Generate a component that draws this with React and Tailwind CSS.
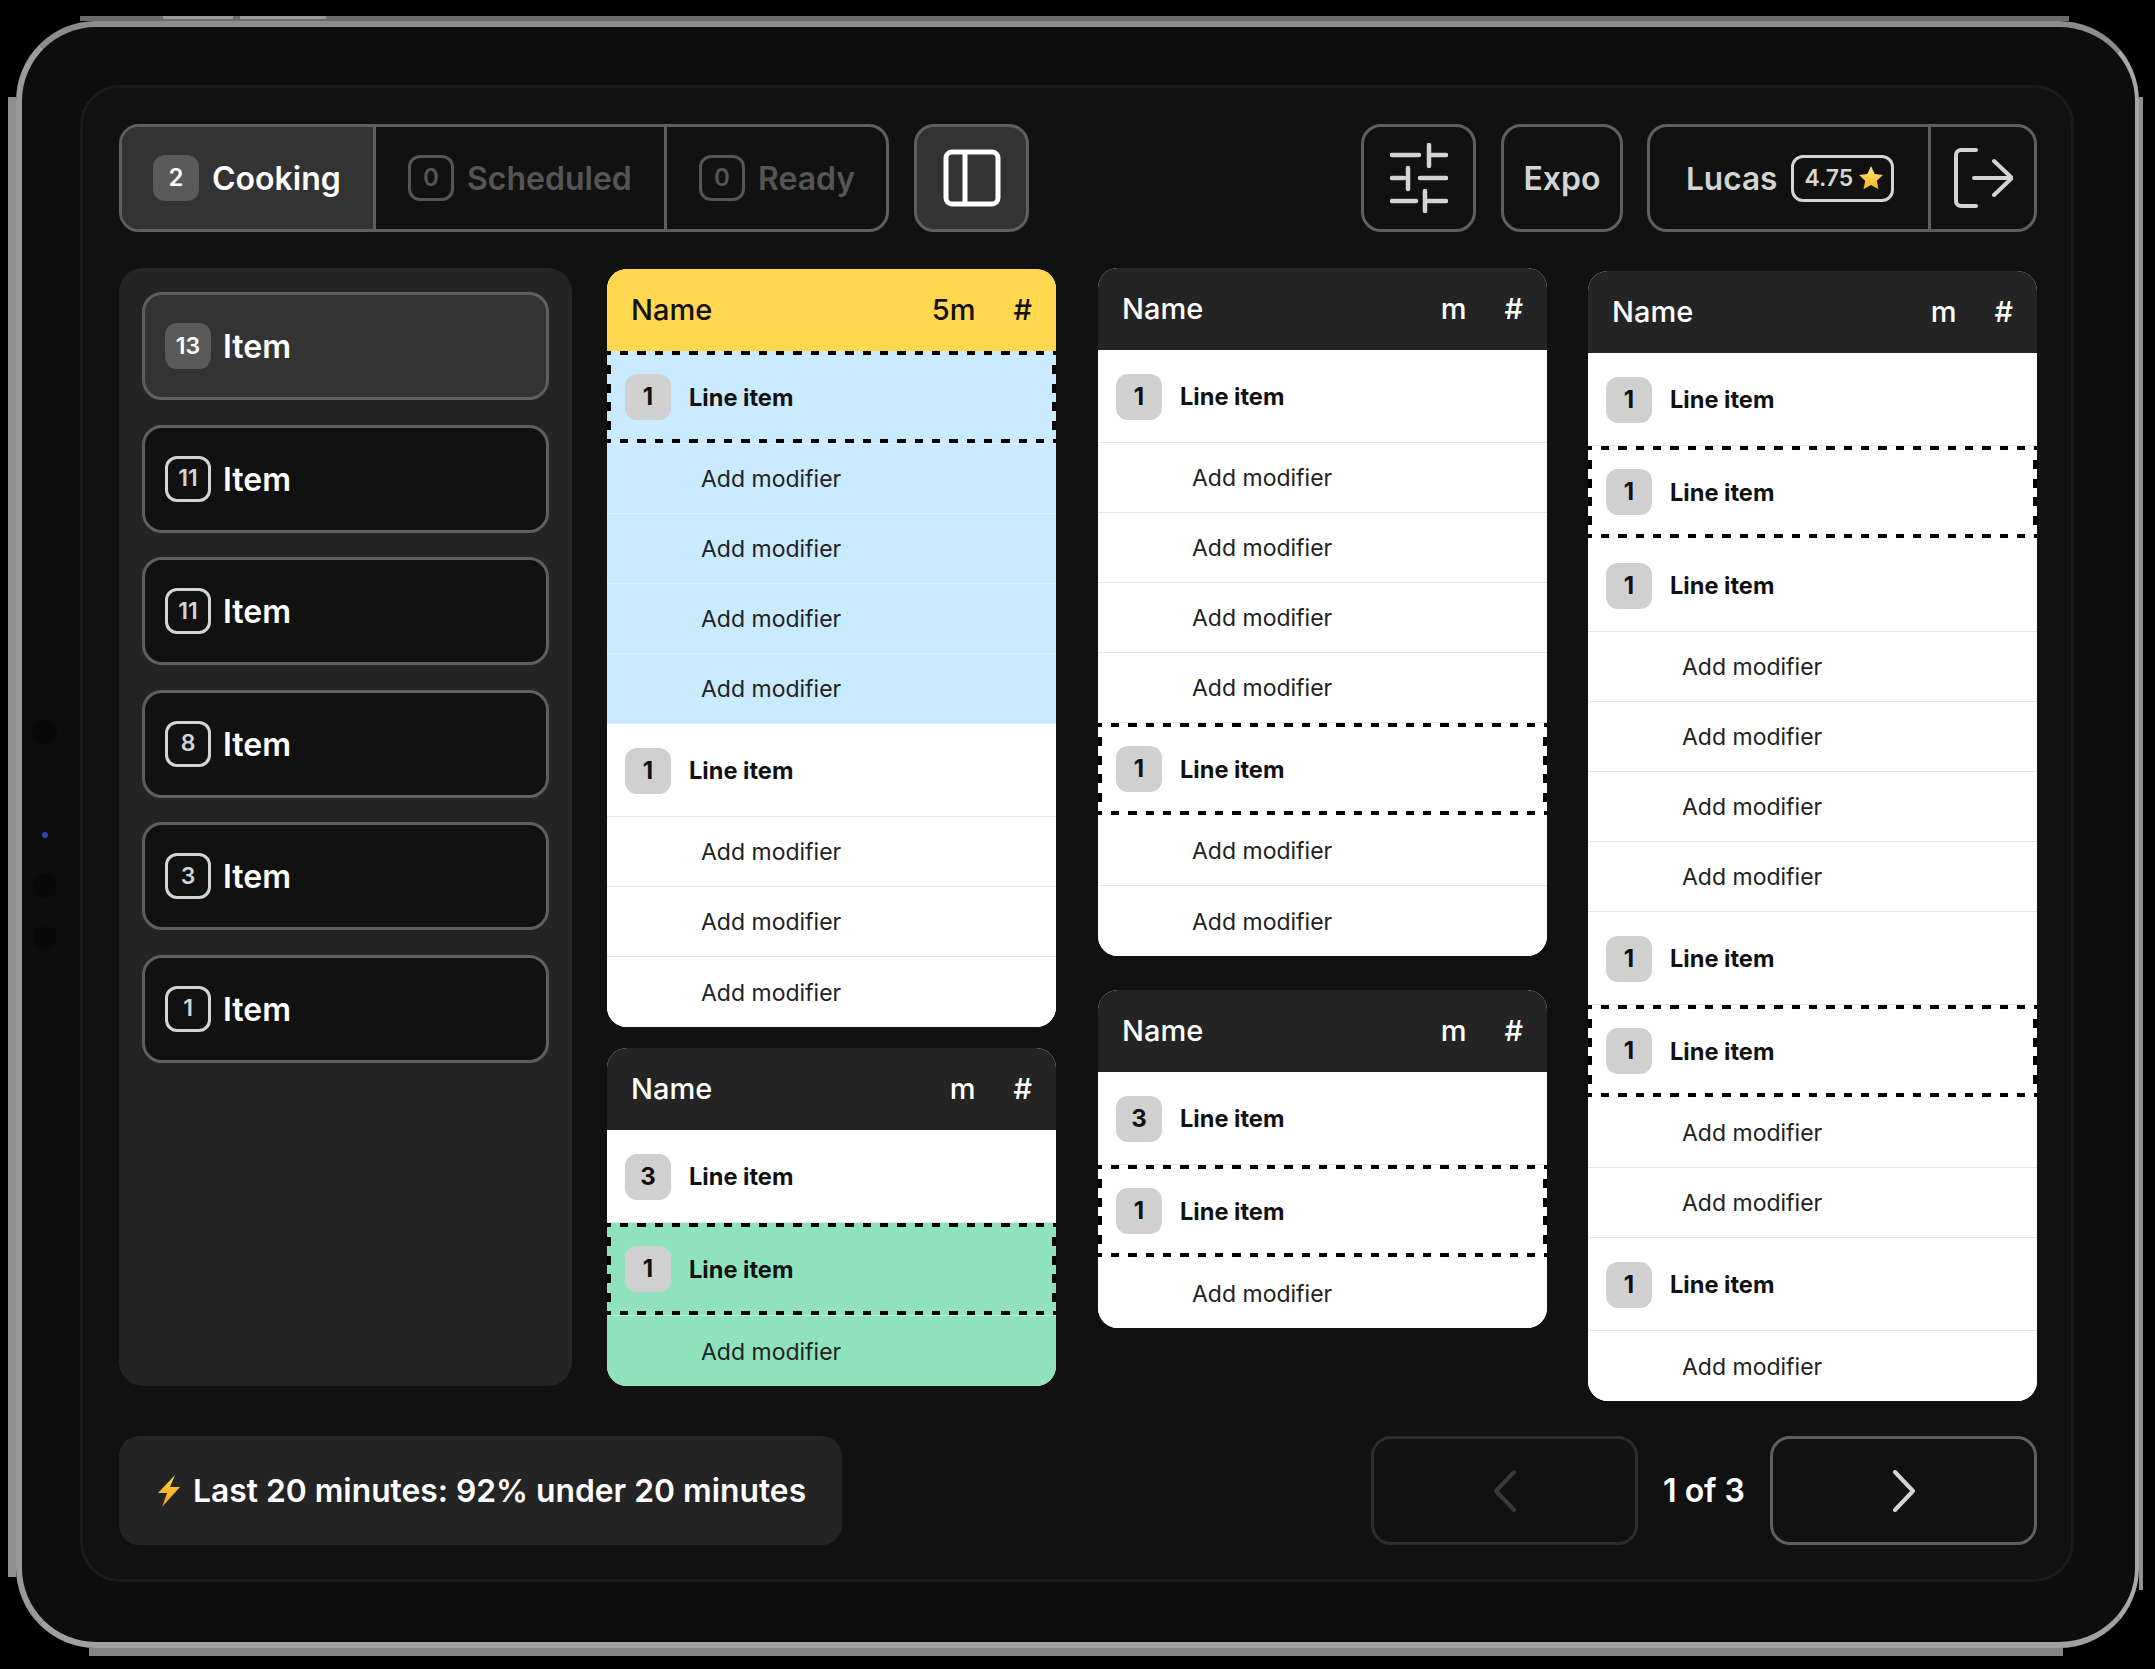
import React from "react";

const font = { fontFamily: "Inter, 'Noto Sans', sans-serif" };

function Panel() {
  return (
    <svg width="58" height="58" viewBox="0 0 58 58" fill="none" stroke="#fff" strokeWidth="5">
      <rect x="3" y="3" width="52" height="52" rx="6" />
      <path d="M22 3v52" />
    </svg>
  );
}

function Sliders() {
  return (
    <svg width="58" height="70" viewBox="0 0 58 70" fill="none" stroke="#d4d4d4" strokeWidth="4.5" strokeLinecap="round">
      <path d="M2 12h27M39 2v21M39 12h17" />
      <path d="M2 35h12M18 25v21M30 35h26" />
      <path d="M2 58h24M35 48v20M35 58h21" />
    </svg>
  );
}

function Logout() {
  return (
    <svg width="60" height="60" viewBox="0 0 60 60" fill="none" stroke="#d4d4d4" strokeWidth="4" strokeLinecap="round" strokeLinejoin="round">
      <path d="M23 2H8a5 5 0 0 0-5 5v46a5 5 0 0 0 5 5h15" />
      <path d="M21 30h38M41 13l18 17-18 17" />
    </svg>
  );
}

function Star() {
  return (
    <svg width="26" height="26" viewBox="0 0 24 24">
      <defs>
        <linearGradient id="starFill" x1="0" y1="0" x2="0" y2="1">
          <stop offset="0" stopColor="#ffe680" />
          <stop offset="1" stopColor="#f5b81c" />
        </linearGradient>
      </defs>
      <path d="M12 1l3.400 7.200 7.600 1-5.600 5.300 1.500 7.800L12 18.500l-6.900 3.800 1.500-7.800L1 9.200l7.600-1z" fill="url(#starFill)" />
    </svg>
  );
}

function Bolt() {
  return (
    <svg width="24" height="32" viewBox="0 0 24 32">
      <defs>
        <linearGradient id="boltFill" x1="0" y1="0" x2="0" y2="1">
          <stop offset="0" stopColor="#ffd84a" />
          <stop offset="1" stopColor="#f29a12" />
        </linearGradient>
      </defs>
      <path d="M18 0L1 18h9L5 32l18-20h-10z" fill="url(#boltFill)" />
    </svg>
  );
}

function Chevron({ dir, color }) {
  return (
    <svg width="24" height="42" viewBox="0 0 24 42" fill="none" stroke={color} strokeWidth="4" strokeLinecap="round" strokeLinejoin="round">
      {dir === "left" ? <path d="M21 2L3 21l18 19" /> : <path d="M3 2l18 19L3 40" />}
    </svg>
  );
}

function Tab({ n, label, active, widthCls }) {
  return (
    <div className={"h-full flex items-center gap-[13px] " + widthCls + " " + (active ? "bg-[#333333] text-white" : "text-[#555555]")}>
      <span
        className={
          "w-[46px] h-[46px] rounded-[12px] flex items-center justify-center text-[24px] font-semibold " +
          (active ? "bg-[#5a5a5a] text-white" : "border-[3px] border-[#555555]")
        }
      >
        {n}
      </span>
      <span className="text-[32px] font-semibold pt-[2px]">{label}</span>
    </div>
  );
}

function SideItem({ n, active }) {
  return (
    <div
      className={
        "h-[108px] shrink-0 rounded-[20px] border-[3px] border-[#5f5f5f] flex items-center pl-[20px] gap-[12px] " +
        (active ? "bg-[#333333]" : "bg-[#111111]")
      }
    >
      <span
        className={
          "w-[46px] h-[46px] rounded-[12px] flex items-center justify-center text-[23px] font-semibold " +
          (active ? "bg-[#5a5a5a] text-white" : "border-[3px] border-[#d4d4d4] text-[#d4d4d4]")
        }
      >
        {n}
      </span>
      <span className="text-[32px] font-semibold text-white pt-[2px]">Item</span>
    </div>
  );
}

const themes = {
  yellow: "bg-[#ffd84f] text-[#111111]",
  dark: "bg-[#242424] text-white",
};

const L = (n, d) => ({ k: "l", n: n ?? 1, d });
const M = { k: "m" };

const dashed =
  "bg-no-repeat bg-[repeating-linear-gradient(90deg,#000_0_4px,transparent_4px_13px,#000_13px_17.33px),repeating-linear-gradient(90deg,#000_0_4px,transparent_4px_13px,#000_13px_17.33px),repeating-linear-gradient(180deg,#000_0_9px,transparent_9px_18.6px),repeating-linear-gradient(180deg,#000_0_9px,transparent_9px_18.6px)] bg-[size:100%_4px,100%_4px,4px_65px,4px_65px] bg-[position:0_0,0_100%,0_14px,100%_14px] ";

function Card({ time, head = "dark", rows, extra = "" }) {
  const tintBg = { blue: "bg-[#c9eaff]", green: "bg-[#8ee3bd]" };
  return (
    <div className={"rounded-[20px] overflow-hidden w-[449px] shrink-0 bg-white " + extra}>
      <div className={"h-[82px] flex items-center pl-[24px] pr-[24px] text-[29px] font-medium " + themes[head]}>
        <span className="flex-1">Name</span>
        <span>{time}</span>
        <span className="ml-[38px]">#</span>
      </div>
      {rows.map((r, i) => {
        const bg = r.t ? tintBg[r.t] : "bg-white";
        const last = i === rows.length - 1;
        const divider = r.t ? "border-white/30" : "border-[#e6e6e6]";
        if (r.k === "l") {
          return (
            <div
              key={i}
              className={
                "h-[93px] flex items-center gap-[18px] pl-[18px] " +
                bg +
                " " +
                (r.d ? dashed + "border-b-[1px] border-white/50" : "pt-[1px] " + (last ? "" : "border-b-[1px] " + divider))
              }
            >
              <span className="w-[46px] h-[46px] rounded-[12px] bg-[#d0d0d0] flex items-center justify-center text-[24px] font-bold text-[#111111]">
                {r.n}
              </span>
              <span className="text-[23.600px] font-bold text-[#111111] pt-[1px]">Line item</span>
            </div>
          );
        }
        return (
          <div
            key={i}
            className={
              "h-[70px] flex items-center pl-[94px] pt-[2px] text-[23px] text-[#222222] " +
              bg +
              " " +
              (last ? "" : "border-b-[1px] " + divider)
            }
          >
            Add modifier
          </div>
        );
      })}
    </div>
  );
}

const t = (r, tint) => ({ ...r, t: tint });

export default function App() {
  return (
    <div className="w-[2155px] h-[1669px] bg-black pt-[21px] pl-[16px] overflow-hidden" style={font}>
      <div className="relative w-[2123px] h-[1627px] rounded-[80px] bg-[#0d0d0d] border-solid border-l-[6px] border-t-[6px] border-r-[4px] border-b-[6px] border-l-[#9a9a9a] border-t-[#8c8c8c] border-r-[#a8a8a8] border-b-[#a0a0a0] pl-[58px] pt-[58px]">
        {/* hardware edge */}
        <span className="absolute -left-[14px] top-[70px] bottom-[65px] w-[8px] bg-[#8f8f8f]" />
        <span className="absolute -right-[8px] top-[70px] bottom-[52px] w-[4px] bg-[#8f8f8f]" />
        <span className="absolute -top-[11px] left-[58px] right-[66px] h-[5px] bg-[#6c6c6c]" />
        <span className="absolute -bottom-[14px] left-[67px] right-[72px] h-[8px] bg-[#858585]" />
        <span className="absolute -top-[11px] left-[141px] w-[70px] h-[3px] bg-[#9a9a9a]" />
        <span className="absolute -top-[11px] left-[218px] w-[86px] h-[3px] bg-[#9a9a9a]" />
        {/* sensors */}
        <span className="absolute left-[11px] top-[693px] w-[24px] h-[24px] rounded-full bg-[#0a0a0a]" />
        <span className="absolute left-[20px] top-[805px] w-[6px] h-[6px] rounded-full bg-[#3a3fb0]" />
        <span className="absolute left-[11px] top-[847px] w-[24px] h-[24px] rounded-full bg-[#0a0a0a]" />
        <span className="absolute left-[11px] top-[898px] w-[24px] h-[24px] rounded-full bg-[#0a0a0a]" />

        <div className="w-[1994px] h-[1497px] rounded-[40px] border-[3px] border-[#1b1b1b] bg-[#111111] pl-[36px] pt-[36px] flex flex-col">
          {/* top bar */}
          <div className="w-[1918px] h-[108px] flex shrink-0">
            <div className="w-[770px] h-full rounded-[20px] border-[3px] border-[#5f5f5f] overflow-hidden flex">
              <Tab n="2" label="Cooking" active widthCls="w-[254px] pl-[31px] border-r-[3px] border-[#5f5f5f]" />
              <Tab n="0" label="Scheduled" widthCls="w-[291px] pl-[32px] border-r-[3px] border-[#5f5f5f]" />
              <Tab n="0" label="Ready" widthCls="flex-1 pl-[32px]" />
            </div>
            <div className="ml-[25px] w-[115px] h-full rounded-[20px] border-[3px] border-[#5f5f5f] bg-[#333333] flex items-center justify-center">
              <Panel />
            </div>
            <div className="ml-auto w-[115px] h-full rounded-[20px] border-[3px] border-[#5f5f5f] flex items-center justify-center">
              <Sliders />
            </div>
            <div className="ml-[25px] w-[122px] h-full rounded-[20px] border-[3px] border-[#5f5f5f] flex items-center justify-center text-[32px] font-semibold text-[#d4d4d4] pt-[2px]">
              Expo
            </div>
            <div className="ml-[24px] w-[390px] h-full rounded-[20px] border-[3px] border-[#5f5f5f] flex items-center">
              <div className="w-[281px] h-full border-r-[3px] border-[#5f5f5f] flex items-center pl-[36px] gap-[14px]">
                <span className="text-[31.600px] font-semibold text-[#d4d4d4] pt-[2px]">Lucas</span>
                <span className="w-[103px] h-[47px] rounded-[12px] border-[3px] border-[#d4d4d4] flex items-center pl-[10px] gap-[5px] text-[23px] font-semibold text-[#d4d4d4]">
                  4.75
                  <Star />
                </span>
              </div>
              <div className="flex-1 flex items-center justify-center">
                <Logout />
              </div>
            </div>
          </div>

          {/* main */}
          <div className="w-[1918px] h-[1118px] mt-[36px] flex shrink-0">
            <div className="w-[453px] h-full rounded-[24px] bg-[#242424] px-[23px] pt-[24px] flex flex-col gap-[24.500px] shrink-0">
              <SideItem n="13" active />
              <SideItem n="11" />
              <SideItem n="11" />
              <SideItem n="8" />
              <SideItem n="3" />
              <SideItem n="1" />
            </div>
            <div className="ml-[35px] mt-[1px] flex flex-col gap-[21px]">
              <Card
                head="yellow"
                time="5m"
                rows={[t(L(1, true), "blue"), t(M, "blue"), t(M, "blue"), t(M, "blue"), t(M, "blue"), L(1), M, M, M]}
              />
              <Card time="m" rows={[L(3), t(L(1, true), "green"), t(M, "green")]} />
            </div>
            <div className="ml-[42px] flex flex-col gap-[34px]">
              <Card time="m" rows={[L(1), M, M, M, M, L(1, true), M, M]} />
              <Card time="m" rows={[L(3), L(1, true), M]} />
            </div>
            <div className="ml-[41px] mt-[3px]">
              <Card
                time="m"
                rows={[L(1), L(1, true), L(1), M, M, M, M, L(1), L(1, true), M, M, L(1), M]}
              />
            </div>
          </div>

          {/* footer */}
          <div className="w-[1918px] h-[109px] mt-[50px] flex items-center shrink-0">
            <div className="w-[723px] h-full rounded-[20px] bg-[#242424] flex items-center pl-[38px] gap-[12px] text-[31.800px] font-semibold text-white">
              <Bolt />
              <span>Last 20 minutes: 92% under 20 minutes</span>
            </div>
            <div className="ml-auto w-[267px] h-full rounded-[20px] border-[3px] border-[#2c2c2c] flex items-center justify-center">
              <Chevron dir="left" color="#3a3a3a" />
            </div>
            <div className="w-[132px] text-center text-[32px] font-semibold text-white">1 of 3</div>
            <div className="w-[267px] h-full rounded-[20px] border-[3px] border-[#5f5f5f] flex items-center justify-center">
              <Chevron dir="right" color="#d4d4d4" />
            </div>
          </div>
        </div>
      </div>
    </div>
  );
}
